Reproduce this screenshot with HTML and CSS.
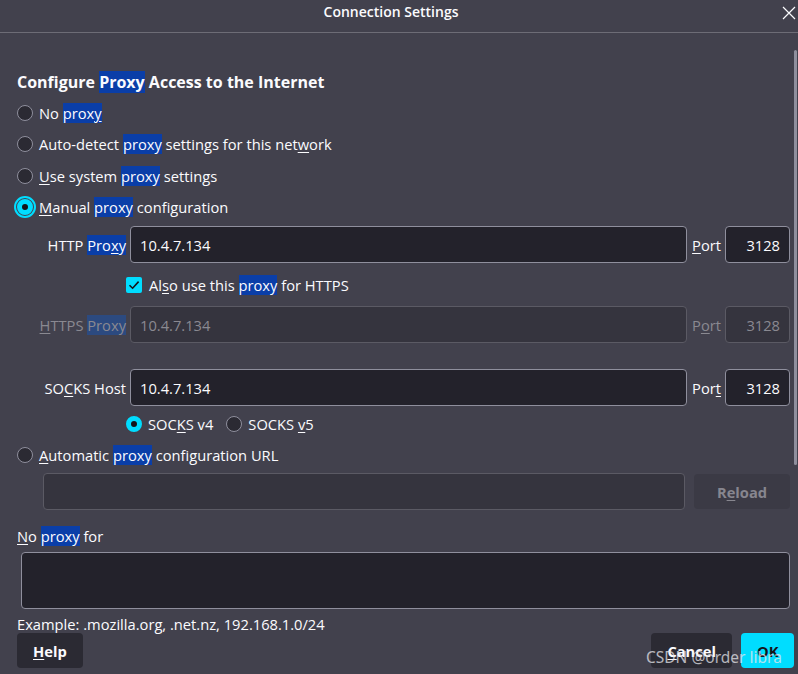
FILE: index.html
```html
<!DOCTYPE html>
<html lang="en">
<head>
    <meta charset="UTF-8">
    <title>Connection Settings</title>
    <link rel="stylesheet" href="styles.css">
</head>
<body>
    <div class="titlebar">
        <span class="title">Connection Settings</span>
        <svg class="close" width="14" height="14" viewBox="0 0 14 14">
            <path d="M1 1 L13 13 M13 1 L1 13" stroke="#fbfbfe" stroke-width="1.2" fill="none"/>
        </svg>
    </div>
    <div class="dialog">
        <h1>Configure <mark>Proxy</mark> Access to the Internet</h1>

        <label class="radio-row"><span class="radio"></span><span>No <mark>prox<u>y</u></mark></span></label>
        <label class="radio-row"><span class="radio"></span><span>Auto-detect <mark>proxy</mark> settings for this net<u>w</u>ork</span></label>
        <label class="radio-row"><span class="radio"></span><span><u>U</u>se system <mark>proxy</mark> settings</span></label>
        <label class="radio-row"><span class="radio checked focused"></span><span><u>M</u>anual <mark>proxy</mark> configuration</span></label>

        <div class="field-row">
            <span class="field-label">HTTP <mark>Pro<u>x</u>y</mark></span>
            <div class="input">10.4.7.134</div>
            <span class="port-label"><u>P</u>ort</span>
            <div class="input port">3128</div>
        </div>

        <label class="check-row"><span class="checkbox">
            <svg width="16" height="16" viewBox="0 0 16 16"><path d="M3.5 8.2 L6.6 11.2 L12.6 4.6" stroke="#15141a" stroke-width="1.6" fill="none"/></svg>
        </span><span>Al<u>s</u>o use this <mark>proxy</mark> for HTTPS</span></label>

        <div class="field-row disabled">
            <span class="field-label"><u>H</u>TTPS <mark>Proxy</mark></span>
            <div class="input">10.4.7.134</div>
            <span class="port-label">P<u>o</u>rt</span>
            <div class="input port">3128</div>
        </div>

        <div class="field-row socks">
            <span class="field-label">SO<u>C</u>KS Host</span>
            <div class="input">10.4.7.134</div>
            <span class="port-label">Por<u>t</u></span>
            <div class="input port">3128</div>
        </div>

        <div class="socks-version">
            <label class="inline-radio"><span class="radio checked"></span><span>SOC<u>K</u>S v4</span></label>
            <label class="inline-radio"><span class="radio"></span><span>SOCKS <u>v</u>5</span></label>
        </div>

        <label class="radio-row auto"><span class="radio"></span><span><u>A</u>utomatic <mark>proxy</mark> configuration URL</span></label>
        <div class="url-row">
            <div class="input url"></div>
            <button class="btn reload">R<u>e</u>load</button>
        </div>

        <div class="no-proxy-label"><u>N</u>o <mark>proxy</mark> for</div>
        <div class="textarea"></div>
        <div class="example">Example: .mozilla.org, .net.nz, 192.168.1.0/24</div>

        <div class="buttons">
            <button class="btn"><u>H</u>elp</button>
            <div class="right-buttons">
                <button class="btn"><u>C</u>ancel</button>
                <button class="btn primary">OK</button>
            </div>
        </div>
    </div>
    <div class="scrollbar"></div>
    <div class="watermark">CSDN @order libra</div>
</body>
</html>
```
FILE: styles.css
```css
* {
    margin: 0;
    padding: 0;
    box-sizing: border-box;
}
body {
    width: 798px;
    height: 674px;
    overflow: hidden;
    position: relative;
    background: #42414d;
    color: #fbfbfe;
    font-family: 'Open Sans', 'Noto Sans', sans-serif;
    font-size: 14.7px;
}
mark {
    background: #0a3ea8;
    color: #fbfbfe;
}
u {
    text-decoration-thickness: 1px;
    text-underline-offset: 2px;
}

/* title bar */
.titlebar {
    height: 33px;
    border-bottom: 1px solid #6d6c76;
    display: flex;
    align-items: center;
    justify-content: center;
    padding-right: 16px;
    position: relative;
}
.title {
    font-weight: 600;
    font-size: 14px;
    margin-top: -10px;
}
.close {
    position: absolute;
    right: 2px;
    top: 6px;
}

.dialog {
    padding: 38px 8px 0 17px;
}
h1 {
    font-size: 16px;
    font-weight: 700;
    height: 26px;
    line-height: 22px;
}

/* radios */
.radio-row {
    display: flex;
    align-items: center;
    height: 31.5px;
}
.radio {
    width: 16px;
    height: 16px;
    border-radius: 50%;
    border: 1px solid #8f8f9d;
    background: #2b2a33;
    margin-right: 6px;
    flex-shrink: 0;
}
.radio.checked {
    border: 5px solid #00ddff;
    background: #15141a;
}
.radio.focused {
    outline: 2px solid #00ddff;
    outline-offset: 1px;
}

/* proxy fields */
.field-row {
    display: flex;
    align-items: center;
    margin-top: 3px;
}
.field-label {
    width: 109px;
    text-align: right;
    margin-right: 4px;
    white-space: nowrap;
}
.input {
    flex: 1;
    height: 37px;
    background: #23222b;
    border: 1px solid #8f8f9d;
    border-radius: 4px;
    padding: 0 9px;
    display: flex;
    align-items: center;
}
.input.port {
    flex: none;
    width: 65px;
    justify-content: flex-end;
}
.port-label {
    margin: 0 4px 0 5px;
}
.disabled {
    margin-top: 0;
    color: #8a8991;
}
.disabled mark {
    background: #2c4a80;
    color: #8a8991;
}
.disabled .input {
    background: #35343e;
    border-color: #5b5a64;
}
.field-row.socks {
    margin-top: 26px;
}

.check-row {
    display: flex;
    align-items: center;
    height: 43px;
    padding-left: 109px;
}
.checkbox {
    width: 16px;
    height: 16px;
    background: #00ddff;
    border-radius: 2px;
    margin-right: 7px;
    display: flex;
}

.socks-version {
    display: flex;
    align-items: center;
    height: 35px;
    padding-left: 109px;
}
.inline-radio {
    display: flex;
    align-items: center;
    margin-right: 13px;
}

.radio-row.auto {
    height: 28px;
}
.url-row {
    display: flex;
    align-items: center;
    margin-top: 4px;
    padding-left: 26px;
}
.input.url {
    background: #35343e;
    border-color: #5b5a64;
    margin-right: 9px;
}

/* buttons */
.btn {
    font-family: inherit;
    font-size: 14.7px;
    font-weight: 700;
    color: #fbfbfe;
    background: #2b2a33;
    border: none;
    border-radius: 4px;
    height: 35px;
    padding: 0 16px;
}
.btn.reload {
    width: 96px;
    background: #3b3a45;
    color: #87868f;
}
.btn.primary {
    background: #00ddff;
    color: #15141a;
    width: 53px;
}

.no-proxy-label {
    margin-top: 16px;
    height: 20px;
    line-height: 20px;
}
.textarea {
    margin: 6px 0 0 4px;
    height: 57px;
    background: #23222b;
    border: 1px solid #8f8f9d;
    border-radius: 4px;
}
.example {
    margin-top: 7px;
    height: 17px;
    line-height: 17px;
}
.buttons {
    display: flex;
    justify-content: space-between;
    margin-right: -4px;
}
.right-buttons {
    display: flex;
    gap: 9px;
}

.scrollbar {
    position: absolute;
    right: 1px;
    top: 50px;
    width: 3px;
    height: 415px;
    border-radius: 2px;
    background: #8f8f9d;
}
.watermark {
    position: absolute;
    left: 646px;
    top: 646px;
    font-family: 'Noto Sans', sans-serif;
    font-size: 15.5px;
    color: rgba(230, 230, 235, 0.75);
}
```
